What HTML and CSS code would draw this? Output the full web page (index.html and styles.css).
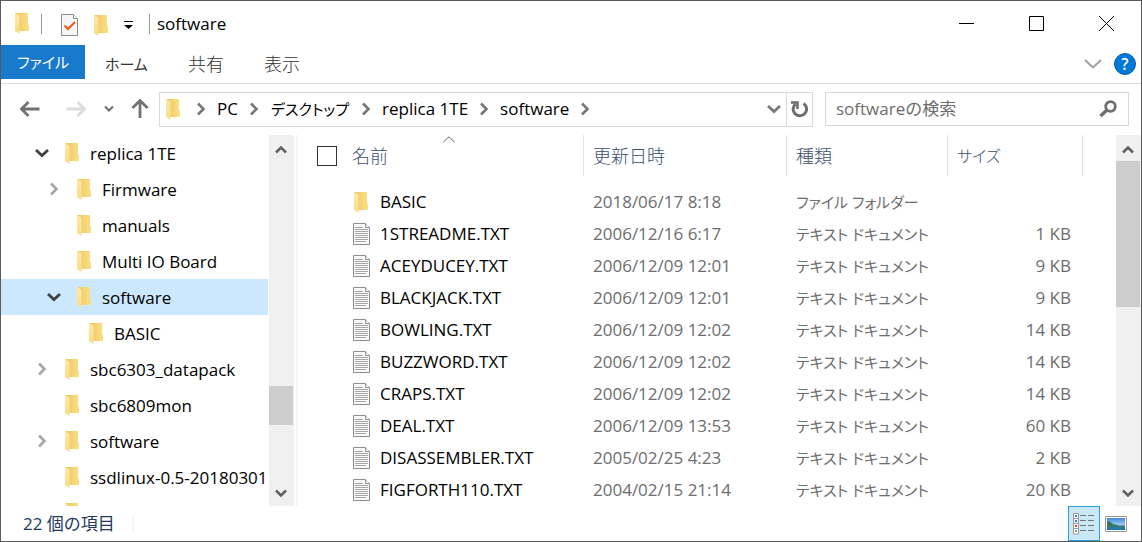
FILE: index.html
```html
<!DOCTYPE html>
<html lang="ja">
<head>
  <meta charset="utf-8">
  <title>software</title>
  <link rel="stylesheet" href="styles.css">
</head>
<body>
  <!-- Shared icons -->
  <svg class="sprite" aria-hidden="true">
    <defs>
      <linearGradient id="folder-back" x1="0" x2="1" y1="0" y2="0">
        <stop offset="0" stop-color="#edc764"/>
        <stop offset="1" stop-color="#fbdf85"/>
      </linearGradient>
      <linearGradient id="folder-front" x1="0" x2="0" y1="0" y2="1">
        <stop offset="0" stop-color="#ffe9a8"/>
        <stop offset="1" stop-color="#fbdc84"/>
      </linearGradient>
      <linearGradient id="sky" x1="0" x2="0" y1="0" y2="1">
        <stop offset="0" stop-color="#3f8ae0"/>
        <stop offset="1" stop-color="#e4f3fa"/>
      </linearGradient>
    </defs>
    <symbol id="folder" viewBox="0 0 14 21">
      <path d="M0 0H13V11L14 12V18H3Z" fill="url(#folder-back)"/>
      <path d="M0 0L4.500 3V21L0 18Z" fill="url(#folder-front)"/>
    </symbol>
    <symbol id="text-file" viewBox="0 0 17 22">
      <path d="M.5.5H12.500L16.500 4.500V21.500H.5Z" fill="#fafafa" stroke="#8c8c8c"/>
      <path d="M12.500.5V4.500H16.500" fill="#fff" stroke="#8c8c8c"/>
      <path d="M2 4.500H10M2 6.500H15M2 8.500H15M2 10.500H15M2 12.500H15M2 14.500H15M2 16.500H15M2 18.500H13" stroke="#a6a6a6"/>
    </symbol>
    <symbol id="right" viewBox="0 0 10 14">
      <path d="M2 1.500L7.500 7L2 12.500" fill="none" stroke="currentColor" stroke-width="2.600"/>
    </symbol>
    <symbol id="down" viewBox="0 0 14 10">
      <path d="M1 2L7 7.500L13 2" fill="none" stroke="currentColor" stroke-width="2.800"/>
    </symbol>
    <symbol id="scroll-up" viewBox="0 0 12 10">
      <path d="M1 7.500L6 2.500L11 7.500" fill="none" stroke="currentColor" stroke-width="2.500"/>
    </symbol>
    <symbol id="scroll-down" viewBox="0 0 12 10">
      <path d="M1 2.500L6 7.500L11 2.500" fill="none" stroke="currentColor" stroke-width="2.500"/>
    </symbol>
  </svg>

  <div class="window">
    <header class="titlebar">
      <svg class="folder app-icon"><use href="#folder"/></svg>
      <span class="divider"></span>
      <button class="quick" aria-label="プロパティ">
        <svg width="17" height="22" viewBox="0 0 17 22">
          <path d="M.5.5H12.500L16.500 4.500V21.500H.5Z" fill="#f6f6f6" stroke="#8c8c8c"/>
          <path d="M12.500.5V4.500H16.500" fill="#fff" stroke="#8c8c8c"/>
          <path d="M3.500 11.500L7 15L14 8" fill="none" stroke="#f0560f" stroke-width="2"/>
        </svg>
      </button>
      <button class="quick" aria-label="新しいフォルダー"><svg class="folder"><use href="#folder"/></svg></button>
      <button class="quick" aria-label="クイック アクセス ツール バーのカスタマイズ">
        <svg width="9" height="8" viewBox="0 0 9 8"><path d="M0 .500H9" stroke="#000"/><path d="M0 4H9L4.500 8Z"/></svg>
      </button>
      <span class="divider title-divider"></span>
      <h1 class="title">software</h1>
      <div class="caption-buttons">
        <button aria-label="最小化"><svg width="15" height="15"><path d="M0 7.500H15" stroke="#000"/></svg></button>
        <button aria-label="最大化"><svg width="15" height="15"><path d="M.5.5H14.500V14.500H.5Z" fill="none" stroke="#000"/></svg></button>
        <button aria-label="閉じる"><svg width="15" height="15"><path d="M0 0L15 15M15 0L0 15" stroke="#000"/></svg></button>
      </div>
    </header>

    <nav class="ribbon">
      <button class="tab tab-file kana">ファイル</button>
      <button class="tab kana">ホーム</button>
      <button class="tab">共有</button>
      <button class="tab">表示</button>
      <div class="ribbon-end">
        <button aria-label="リボンの展開"><svg width="18" height="10" viewBox="0 0 18 10"><path d="M1 1L9 8.500L17 1" fill="none" stroke="#a0a0a0" stroke-width="2"/></svg></button>
        <button class="help" aria-label="ヘルプ">?</button>
      </div>
    </nav>

    <div class="navbar">
      <div class="history">
        <button aria-label="戻る"><svg width="20" height="16" viewBox="0 0 20 16"><path d="M8.500 1L1.500 8L8.500 15M2 8H19.500" fill="none" stroke="#727272" stroke-width="2.800"/></svg></button>
        <button aria-label="進む" disabled><svg width="20" height="16" viewBox="0 0 20 16"><path d="M11.500 1L18.500 8L11.500 15M18 8H.5" fill="none" stroke="#dcdcdc" stroke-width="2.800"/></svg></button>
        <button class="recent" aria-label="最近表示した場所"><svg width="10" height="8" viewBox="0 0 10 8"><path d="M1 1.500L5 5.500L9 1.500" fill="none" stroke="#727272" stroke-width="2.200"/></svg></button>
        <button class="up" aria-label="上へ"><svg width="18" height="20" viewBox="0 0 18 20"><path d="M1.500 9L9 1.500L16.500 9M9 2V19" fill="none" stroke="#727272" stroke-width="2.800"/></svg></button>
      </div>
      <div class="address">
        <svg class="folder"><use href="#folder"/></svg>
        <svg class="right"><use href="#right"/></svg>
        <a href="#">PC</a>
        <svg class="right"><use href="#right"/></svg>
        <a href="#" class="kana">デスクトップ</a>
        <svg class="right"><use href="#right"/></svg>
        <a href="#">replica 1TE</a>
        <svg class="right"><use href="#right"/></svg>
        <a href="#">software</a>
        <svg class="right"><use href="#right"/></svg>
        <button class="previous" aria-label="以前の場所"><svg class="down"><use href="#down"/></svg></button>
        <button class="refresh" aria-label="最新の情報に更新">
          <svg width="17" height="17" viewBox="0 0 17 17">
            <path d="M12.500 2.500A6.700 6.700 0 1 1 4.500 3" fill="none" stroke="#6e6e6e" stroke-width="3"/>
            <path d="M0 1.500H6.500V8" fill="none" stroke="#6e6e6e" stroke-width="2.600"/>
          </svg>
        </button>
      </div>
      <form class="search">
        <input type="search" aria-label="検索" placeholder="softwareの検索">
        <button type="button" aria-label="検索"><svg width="18" height="18" viewBox="0 0 18 18"><circle cx="11.500" cy="6.500" r="4.800" fill="none" stroke="#6e6e6e" stroke-width="2.800"/><path d="M8 10L1.500 16" stroke="#6e6e6e" stroke-width="3.400"/></svg></button>
      </form>
    </div>

    <main class="panes">
      <ul class="tree">
        <li class="open"><button aria-label="折りたたむ"><svg class="down"><use href="#down"/></svg></button><svg class="folder"><use href="#folder"/></svg><span>replica 1TE</span></li>
        <li class="level-2"><button aria-label="展開"><svg class="right"><use href="#right"/></svg></button><svg class="folder"><use href="#folder"/></svg><span>Firmware</span></li>
        <li class="level-2 leaf"><svg class="folder"><use href="#folder"/></svg><span>manuals</span></li>
        <li class="level-2 leaf"><svg class="folder"><use href="#folder"/></svg><span>Multi IO Board</span></li>
        <li class="level-2 open selected"><button aria-label="折りたたむ"><svg class="down"><use href="#down"/></svg></button><svg class="folder"><use href="#folder"/></svg><span>software</span></li>
        <li class="level-3 leaf"><svg class="folder"><use href="#folder"/></svg><span>BASIC</span></li>
        <li><button aria-label="展開"><svg class="right"><use href="#right"/></svg></button><svg class="folder"><use href="#folder"/></svg><span>sbc6303_datapack</span></li>
        <li class="leaf"><svg class="folder"><use href="#folder"/></svg><span>sbc6809mon</span></li>
        <li><button aria-label="展開"><svg class="right"><use href="#right"/></svg></button><svg class="folder"><use href="#folder"/></svg><span>software</span></li>
        <li class="leaf"><svg class="folder"><use href="#folder"/></svg><span>ssdlinux-0.5-20180301</span></li>
        <li class="leaf"><svg class="folder"><use href="#folder"/></svg></li>
      </ul>
      <div class="scrollbar tree-scroll">
        <button aria-label="上へスクロール"><svg class="arrow"><use href="#scroll-up"/></svg></button>
        <div class="track"><div class="before"></div><div class="thumb"></div><div class="after"></div></div>
        <button aria-label="下へスクロール"><svg class="arrow"><use href="#scroll-down"/></svg></button>
      </div>

      <div class="files">
        <table>
          <colgroup>
            <col class="col-name"><col class="col-date"><col class="col-type"><col class="col-size"><col>
          </colgroup>
          <thead>
            <tr>
              <th>
                <div class="head name-head">
                  <input type="checkbox" id="select-all"><label for="select-all">名前</label>
                  <svg class="sort" width="12" height="7" viewBox="0 0 12 7"><path d="M.5 6L6 .800L11.500 6" fill="none" stroke="#666"/></svg>
                </div>
              </th>
              <th><div class="head">更新日時</div></th>
              <th><div class="head">種類</div></th>
              <th><div class="head kana">サイズ</div></th>
              <th></th>
            </tr>
          </thead>
          <tbody>
            <tr><td><div class="file"><svg class="folder"><use href="#folder"/></svg>BASIC</div></td><td>2018/06/17 8:18</td><td class="kana">ファイル フォルダー</td><td></td><td></td></tr>
            <tr><td><div class="file"><svg class="text-file"><use href="#text-file"/></svg>1STREADME.TXT</div></td><td>2006/12/16 6:17</td><td class="kana">テキスト ドキュメント</td><td class="size">1 KB</td><td></td></tr>
            <tr><td><div class="file"><svg class="text-file"><use href="#text-file"/></svg>ACEYDUCEY.TXT</div></td><td>2006/12/09 12:01</td><td class="kana">テキスト ドキュメント</td><td class="size">9 KB</td><td></td></tr>
            <tr><td><div class="file"><svg class="text-file"><use href="#text-file"/></svg>BLACKJACK.TXT</div></td><td>2006/12/09 12:01</td><td class="kana">テキスト ドキュメント</td><td class="size">9 KB</td><td></td></tr>
            <tr><td><div class="file"><svg class="text-file"><use href="#text-file"/></svg>BOWLING.TXT</div></td><td>2006/12/09 12:02</td><td class="kana">テキスト ドキュメント</td><td class="size">14 KB</td><td></td></tr>
            <tr><td><div class="file"><svg class="text-file"><use href="#text-file"/></svg>BUZZWORD.TXT</div></td><td>2006/12/09 12:02</td><td class="kana">テキスト ドキュメント</td><td class="size">14 KB</td><td></td></tr>
            <tr><td><div class="file"><svg class="text-file"><use href="#text-file"/></svg>CRAPS.TXT</div></td><td>2006/12/09 12:02</td><td class="kana">テキスト ドキュメント</td><td class="size">14 KB</td><td></td></tr>
            <tr><td><div class="file"><svg class="text-file"><use href="#text-file"/></svg>DEAL.TXT</div></td><td>2006/12/09 13:53</td><td class="kana">テキスト ドキュメント</td><td class="size">60 KB</td><td></td></tr>
            <tr><td><div class="file"><svg class="text-file"><use href="#text-file"/></svg>DISASSEMBLER.TXT</div></td><td>2005/02/25 4:23</td><td class="kana">テキスト ドキュメント</td><td class="size">2 KB</td><td></td></tr>
            <tr><td><div class="file"><svg class="text-file"><use href="#text-file"/></svg>FIGFORTH110.TXT</div></td><td>2004/02/15 21:14</td><td class="kana">テキスト ドキュメント</td><td class="size">20 KB</td><td></td></tr>
          </tbody>
        </table>
      </div>
      <div class="scrollbar file-scroll">
        <button aria-label="上へスクロール"><svg class="arrow"><use href="#scroll-up"/></svg></button>
        <div class="track"><div class="thumb"></div><div class="after"></div></div>
        <button aria-label="下へスクロール"><svg class="arrow"><use href="#scroll-down"/></svg></button>
      </div>
    </main>

    <footer class="status">
      <span class="count">22 個の項目</span>
      <div class="views">
        <button class="view active" aria-label="詳細">
          <svg width="22" height="22" viewBox="0 0 22 22">
            <path d="M.5.5H5.500V21H.5ZM.5 5.500H5.500M.5 10.500H5.500M.5 15.500H5.500" fill="#fff" stroke="#9a9a9a"/>
            <path d="M2 3H4" stroke="#3b8f9c" stroke-width="2"/>
            <path d="M2 8H4" stroke="#3d6fc4" stroke-width="2"/>
            <path d="M2 13H4" stroke="#d43c1c" stroke-width="2"/>
            <path d="M2 18H4" stroke="#8aa860" stroke-width="2"/>
            <path d="M7 2.500H13M15 2.500H21M7 7.500H13M15 7.500H21M7 12.500H13M15 12.500H21M7 17.500H13M15 17.500H21" stroke="#777"/>
          </svg>
        </button>
        <button class="view" aria-label="大アイコン">
          <svg width="22" height="16" viewBox="0 0 22 16">
            <path d="M.5.5H21.500V15.500H.5Z" fill="#fff" stroke="#9a9a9a"/>
            <path d="M2 2H20V14H2Z" fill="url(#sky)"/>
            <path d="M2 5Q5 5 8 8L14 9.500H20V11H2Z" fill="#3c7565"/>
            <path d="M2 11H20V14H2Z" fill="#2878a8"/>
          </svg>
        </button>
      </div>
    </footer>
  </div>
</body>
</html>
```
FILE: styles.css
```css
* {box-sizing: border-box;}

body {
  margin: 0;
  font: 17px/24px "Open Sans", "Noto Sans CJK JP", sans-serif;
  color: #000;
  background: #fff;
}

button {
  display: flex;
  align-items: center;
  justify-content: center;
  padding: 0;
  border: 0;
  background: none;
  font: inherit;
  color: inherit;
}

svg {flex: none; display: block;}

.sprite {position: absolute; width: 0; height: 0;}
.folder {width: 14px; height: 21px;}
.text-file {width: 17px; height: 22px;}
.right {width: 10px; height: 14px;}
.down {width: 14px; height: 10px;}
.arrow {width: 12px; height: 10px;}

/* Proportional kana, as in the system UI font */
.kana {
  font-size: 15px;
  font-feature-settings: "palt";
}

.window {
  display: flex;
  flex-direction: column;
  height: 100vh;
  border: 1px solid #5a5a5a;
  overflow: hidden;
}

/* Title bar */
.titlebar {
  display: flex;
  align-items: center;
  height: 44px;
  padding-left: 14px;
}

.divider {
  width: 1px;
  height: 20px;
  margin: 2px 0 0 12px;
  background: #999;
}

.title-divider {margin-left: 16px;}

.quick {margin: 4px 0 0 16px;}
.divider + .quick {margin-left: 19px;}

.title {
  margin: 2px 0 0 7px;
  font-size: 17px;
  font-weight: normal;
}

.caption-buttons {display: flex; margin-left: auto;}
.caption-buttons button {width: 70px; height: 44px;}

/* Ribbon */
.ribbon {
  display: flex;
  height: 39px;
  border-bottom: 1px solid #dadbdc;
}

.tab {
  height: 38px;
  padding: 0 20px;
  font-size: 18px;
  font-weight: 300;
  color: #333;
}

.tab.kana {font-size: 15px; font-weight: normal;}

.tab-file {
  width: 84px;
  height: 34px;
  padding: 0;
  background: #1979ca;
}

.tab.tab-file {color: #fff;}

.ribbon-end {
  display: flex;
  align-items: center;
  gap: 12px;
  margin-left: auto;
  padding-right: 5px;
}

.help {
  width: 22px;
  height: 22px;
  border: 1px solid #0a5ea8;
  border-radius: 50%;
  background: #0078d7;
  color: #fff;
  font-size: 16px;
  font-weight: 600;
}

/* Address bar */
.navbar {
  display: flex;
  align-items: center;
  gap: 12px;
  height: 51px;
  padding: 0 12px 1px 0;
}

.history {
  display: flex;
  align-items: center;
  gap: 26px;
  width: 146px;
  padding-left: 19px;
}

.history .recent {margin-left: -8px;}
.history .up {margin-left: -9px;}

.address {
  display: flex;
  flex: 1;
  align-items: center;
  height: 35px;
  padding-left: 6px;
  border: 1px solid #d9d9d9;
  color: #777;
}

.address .folder {margin-right: 16px;}

.address a {
  margin: 0 11px;
  color: #000;
  text-decoration: none;
  white-space: nowrap;
}

.address a.kana {margin: 0 12px;}

.previous {margin-left: auto; width: 24px; height: 33px;}
.refresh {width: 26px; height: 33px; border-left: 1px solid #d9d9d9;}

.search {
  display: flex;
  align-items: center;
  width: 304px;
  height: 34px;
  padding: 0 11px 0 10px;
  border: 1px solid #d9d9d9;
}

.search input {
  flex: 1;
  min-width: 0;
  padding: 0;
  border: 0;
  outline: 0;
  font: inherit;
}

.search input::placeholder {color: #6d6d6d;}

/* Panes */
.panes {
  display: flex;
  flex: 1;
  min-height: 0;
}

.tree {
  width: 268px;
  margin: 0;
  padding: 0;
  list-style: none;
  overflow: hidden;
}

.tree li {
  display: flex;
  align-items: center;
  height: 36px;
  margin-right: 1px;
  padding-left: 28px;
  white-space: nowrap;
}

.tree span {padding-top: 1px;}
.tree .level-2 {padding-left: 40px;}
.tree .level-3 {padding-left: 52px;}
.tree button {width: 25px; height: 24px; color: #a6a6a6;}
.tree .open button {color: #404040;}
.tree .folder {margin: 0 11px;}
.tree .leaf .folder {margin-left: 36px;}
.tree .selected {background: #cce8ff;}

.scrollbar {
  display: flex;
  flex-direction: column;
  width: 25px;
  background: #f0f0f0;
  color: #606060;
}

.scrollbar button {width: 24px; height: 26px;}
.scrollbar button:first-child {padding-top: 4px;}
.track {display: flex; flex: 1; flex-direction: column;}
.thumb {width: 24px; background: #cdcdcd;}

.tree-scroll .before {flex: 225;}
.tree-scroll .thumb {flex: 39;}
.tree-scroll .after {flex: 55;}
.file-scroll .thumb {flex: 146;}
.file-scroll .after {flex: 173;}

/* File list */
.files {
  flex: 1;
  min-width: 0;
  margin-left: 2px;
  border-left: 2px solid #f5f5f5;
  overflow: hidden;
}

table {
  width: 100%;
  table-layout: fixed;
  border-collapse: collapse;
}

.col-name {width: 286px;}
.col-date {width: 203px;}
.col-type {width: 161px;}
.col-size {width: 135px;}

th {
  height: 51px;
  padding: 0;
  vertical-align: top;
  font-size: 18px;
  font-weight: 300;
  text-align: left;
  color: #3a506c;
}

.head {
  display: flex;
  align-items: center;
  height: 41px;
  padding-left: 9px;
  border-right: 1px solid #e5e5e5;
}

.name-head {position: relative; padding-left: 19px;}

.head.kana {font-size: 16px;}

.name-head input {
  appearance: none;
  width: 20px;
  height: 20px;
  margin: 0 15px 0 0;
  border: 1px solid #333;
  background: #fff;
}

.sort {
  position: absolute;
  top: 1px;
  left: 51%;
}

td {
  height: 32px;
  padding: 0 0 0 9px;
  white-space: nowrap;
  color: #6d6d6d;
}

.file {
  display: flex;
  align-items: center;
  gap: 10px;
  padding-left: 46px;
  color: #000;
}

.file .folder {margin: 0 2px 0 1px;}

.size {padding: 0 12px 0 0; text-align: right;}

/* Status bar */
.status {
  display: flex;
  align-items: center;
  height: 35px;
  padding-left: 22px;
  color: #1e395b;
}

.count {
  padding-right: 17px;
  border-right: 2px solid #f5f5f5;
  line-height: 17px;
}

.views {display: flex; margin-left: auto; padding-right: 9px;}
.view {width: 32px; height: 35px;}
.active {border: 1px solid #26a0da; background: #cbe8f6;}
```
